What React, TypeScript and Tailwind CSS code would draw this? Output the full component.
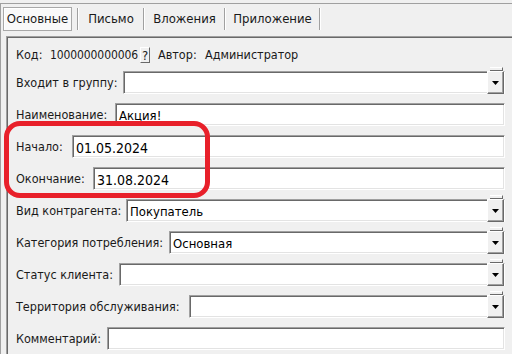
import React from 'react';

const FONT = "font-['DejaVu_Sans_Condensed','Liberation_Sans',sans-serif]";

interface Row {
    label: string;
    labelW: string;
    value?: string;
    big?: boolean;
    combo?: boolean;
}

const rows: Row[] = [
    { label: 'Входит в группу:', labelW: 'w-[107px]', combo: true },
    { label: 'Наименование:', labelW: 'w-[99px]', value: 'Акция!' },
    { label: 'Начало:', labelW: 'w-[56px]', value: '01.05.2024', big: true },
    { label: 'Окончание:', labelW: 'w-[77px]', value: '31.08.2024', big: true },
    { label: 'Вид контрагента:', labelW: 'w-[110px]', value: 'Покупатель', combo: true },
    { label: 'Категория потребления:', labelW: 'w-[153px]', value: 'Основная', combo: true },
    { label: 'Статус клиента:', labelW: 'w-[103px]', combo: true },
    { label: 'Территория обслуживания:', labelW: 'w-[173px]', combo: true },
    { label: 'Комментарий:', labelW: 'w-[91px]' },
];

const DropButton = () => (
    <>
        {/* обрезок кнопки над полем */}
        <div className="absolute top-[-4px] right-[2px] w-[13px] h-[4px] bg-[#f0f0f0] border-t border-t-white border-r border-b border-r-[#696969] border-b-[#696969]" />
        <div className="absolute top-0 right-[1px] w-[17px] h-full flex items-center justify-center bg-[#f0f0f0] border border-t-white border-l-white border-r-[#696969] border-b-[#696969] shadow-[inset_-1px_-1px_0_#a0a0a0]">
            <svg width="7" height="4" viewBox="0 0 7 4">
                <path d="M0 0 H7 L3.5 4 Z" fill="#000" />
            </svg>
        </div>
    </>
);

const Field = ({ row }: { row: Row }) => (
    <div className="flex items-center h-[23px]">
        <div className={`${row.labelW} shrink-0 text-[12.5px] text-[#1a1a1a] leading-none pt-[1px]`}>
            {row.label}
        </div>
        <div className="relative flex-1 h-full">
            <div className="h-full bg-white border border-t-[#a0a0a0] border-l-[#a0a0a0] border-r-white border-b-white shadow-[inset_1px_1px_0_#696969,inset_-1px_-1px_0_#e3e3e3] flex items-center pl-[3px]">
                {row.value && (
                    <span className={`${row.big ? 'text-[14px]' : 'text-[13px]'} text-black leading-none pt-[2px]`}>
                        {row.value}
                    </span>
                )}
            </div>
            {row.combo && <DropButton />}
        </div>
    </div>
);

export default function App() {
    return (
        <div className={`relative w-[512px] h-[354px] overflow-hidden bg-[#f0f0f0] pt-[3px] ${FONT}`}>
            <div className="h-full border-t border-l border-[#a0a0a0]">
                {/* вкладки */}
                <div className="h-[32px] pt-[3px] flex items-start text-[13px] text-[#1a1a1a]">
                    <div className="ml-[2px] w-[69px] h-[24px] flex items-center justify-center bg-[#f9f9f9] border border-[#a8a8a8] shadow-[inset_1px_1px_0_#ffffff]">
                        Основные
                    </div>
                    <div className="w-[5px]" />
                    <div className="w-[2px] h-[22px] mt-[1px] border-l border-l-[#a0a0a0] border-r border-r-white" />
                    <div className="w-[64px] h-[24px] flex items-center justify-center">Письмо</div>
                    <div className="w-[2px] h-[22px] mt-[1px] border-l border-l-[#a0a0a0] border-r border-r-white" />
                    <div className="w-[79px] h-[24px] flex items-center justify-center">Вложения</div>
                    <div className="w-[2px] h-[22px] mt-[1px] border-l border-l-[#a0a0a0] border-r border-r-white" />
                    <div className="w-[93px] h-[24px] flex items-center justify-center">Приложение</div>
                    <div className="w-[2px] h-[22px] mt-[1px] border-l border-l-[#a0a0a0] border-r border-r-white" />
                </div>

                {/* панель */}
                <div className="ml-[5px] h-full border-t border-l border-[#a0a0a0] shadow-[inset_1px_1px_0_#696969] pt-[10px] pl-[9px] pr-[7px]">
                    <div className="flex items-center h-[16px] text-[12.5px] text-[#1a1a1a]">
                        <span className="w-[34px]">Код:</span>
                        <span className="w-[90px] text-[12px] tracking-[-0.1px]">1000000000006</span>
                        <div className="w-[10px] h-[16px] flex items-center justify-center bg-[#f0f0f0] border border-t-white border-l-white border-r-[#696969] border-b-[#696969] text-[13px] leading-none">
                            ?
                        </div>
                        <span className="ml-[8px] w-[47px]">Автор:</span>
                        <span>Администратор</span>
                    </div>
                    <div className="mt-[8px] flex flex-col gap-[9px]">
                        {rows.map((row, i) => (
                            <Field key={i} row={row} />
                        ))}
                    </div>
                </div>
            </div>

            {/* красная рамка */}
            <div className="absolute left-[4px] top-[121px] w-[206px] h-[77px] border-[5px] border-[#e8202a] rounded-[16px]" />
        </div>
    );
}
